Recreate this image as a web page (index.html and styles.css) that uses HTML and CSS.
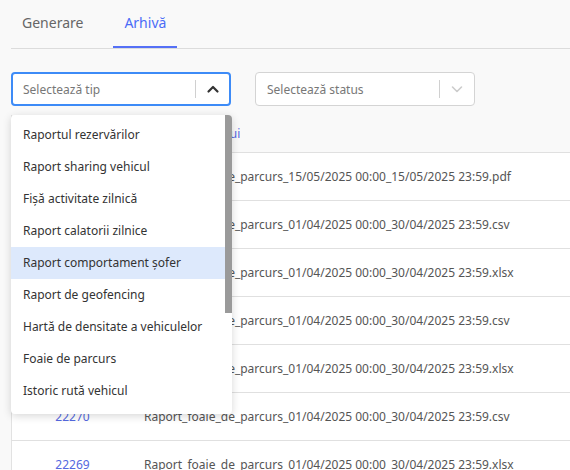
FILE: index.html
```html
<!DOCTYPE html>
<html lang="ro">

<head>
  <meta charset="UTF-8">
  <meta name="viewport" content="width=device-width, initial-scale=1.0">
  <title>Rapoarte - Arhivă</title>
  <link rel="stylesheet" href="styles.css">
</head>

<body>
  <!-- Tabs -->
  <div class="tabs">
    <div class="tab">Generare</div>
    <div class="tab active">Arhivă</div>
  </div>

  <!-- Filtre -->
  <div class="filters">
    <div class="select open">
      <span class="placeholder">Selectează tip</span>
      <span class="sep"></span>
      <svg class="chevron" width="14" height="14" viewBox="0 0 14 14">
        <path d="M2.5 9.5 L7 5 L11.5 9.5" fill="none" stroke="#333" stroke-width="2.2" stroke-linecap="round" stroke-linejoin="round"/>
      </svg>

      <!-- Lista tipuri raport -->
      <div class="dropdown">
        <ul>
          <li>Raportul rezervărilor</li>
          <li>Raport sharing vehicul</li>
          <li>Fişă activitate zilnică</li>
          <li>Raport calatorii zilnice</li>
          <li class="focused">Raport comportament şofer</li>
          <li>Raport de geofencing</li>
          <li>Hartă de densitate a vehiculelor</li>
          <li>Foaie de parcurs</li>
          <li>Istoric rută vehicul</li>
          <li>Raport alimentări</li>
          <li>Raport kilometraj</li>
          <li>Raport opriri</li>
          <li>Raport viteză</li>
          <li>Raport utilizare vehicul</li>
        </ul>
        <span class="scroll-thumb"></span>
      </div>
    </div>

    <div class="select">
      <span class="placeholder">Selectează status</span>
      <span class="sep"></span>
      <svg class="chevron" width="14" height="14" viewBox="0 0 14 14">
        <path d="M2.5 5 L7 9.5 L11.5 5" fill="none" stroke="#ccc" stroke-width="1.6" stroke-linecap="round" stroke-linejoin="round"/>
      </svg>
    </div>
  </div>

  <!-- Tabel arhivă -->
  <table class="archive">
    <thead>
      <tr>
        <th class="col-id">ID</th>
        <th class="col-name">Numele fișierului</th>
      </tr>
    </thead>
    <tbody>
      <tr>
        <td class="col-id"><a href="#">22275</a></td>
        <td>Raport_foaie_de_parcurs_15/05/2025 00:00_15/05/2025 23:59.pdf</td>
      </tr>
      <tr>
        <td class="col-id"><a href="#">22274</a></td>
        <td>Raport_foaie_de_parcurs_01/04/2025 00:00_30/04/2025 23:59.csv</td>
      </tr>
      <tr>
        <td class="col-id"><a href="#">22273</a></td>
        <td>Raport_foaie_de_parcurs_01/04/2025 00:00_30/04/2025 23:59.xlsx</td>
      </tr>
      <tr>
        <td class="col-id"><a href="#">22272</a></td>
        <td>Raport_foaie_de_parcurs_01/04/2025 00:00_30/04/2025 23:59.csv</td>
      </tr>
      <tr>
        <td class="col-id"><a href="#">22271</a></td>
        <td>Raport_foaie_de_parcurs_01/04/2025 00:00_30/04/2025 23:59.xlsx</td>
      </tr>
      <tr>
        <td class="col-id"><a href="#">22270</a></td>
        <td>Raport_foaie_de_parcurs_01/04/2025 00:00_30/04/2025 23:59.csv</td>
      </tr>
      <tr>
        <td class="col-id"><a href="#">22269</a></td>
        <td>Raport_foaie_de_parcurs_01/04/2025 00:00_30/04/2025 23:59.xlsx</td>
      </tr>
    </tbody>
  </table>
</body>

</html>
```

FILE: styles.css
```css
body {
  font-family: "Noto Sans", "Open Sans", sans-serif;
  margin: 0;
  padding: 0 0 0 11px;
  background-color: #f9f9f9;
  color: #333;
  overflow: hidden;
}

/* Tabs */
.tabs {
  display: flex;
  gap: 19px;
  border-bottom: 1px solid #dcdcdc;
}

.tab {
  padding: 0 11px;
  height: 46px;
  line-height: 46px;
  font-size: 14px;
  color: #666;
  border-bottom: 2px solid transparent;
}

.tab.active {
  color: #4a6cf7;
  border-bottom-color: #5570f6;
}

/* Filters */
.filters {
  display: flex;
  gap: 24px;
  padding-top: 23px;
}

.select {
  position: relative;
  display: flex;
  align-items: center;
  box-sizing: border-box;
  width: 220px;
  height: 34px;
  padding: 0 10px 0 11px;
  background-color: #fff;
  border: 1px solid #d4d4d4;
  border-radius: 4px;
}

.select.open {
  border: 2px solid #3d8bf7;
  padding: 0 9px 0 10px;
}

.placeholder {
  flex: 1;
  font-size: 12px;
  color: #777;
}

.sep {
  width: 1px;
  height: 18px;
  background-color: #d0d0d0;
  margin-right: 10px;
}

.chevron {
  display: block;
}

/* Dropdown */
.dropdown {
  position: absolute;
  top: 41px;
  left: -2px;
  width: 221px;
  height: 299px;
  overflow: hidden;
  background-color: #fff;
  border-radius: 4px;
  box-shadow: 0 2px 8px rgba(0, 0, 0, 0.16);
  z-index: 10;
}

.dropdown ul {
  margin: 0;
  padding: 4px 7px 0 0;
  list-style: none;
}

.dropdown li {
  height: 32px;
  line-height: 32px;
  padding-left: 12px;
  font-size: 12px;
  color: #333;
  white-space: nowrap;
}

.dropdown li.focused {
  background-color: #dde9fc;
}

.scroll-thumb {
  position: absolute;
  top: 0;
  right: 0;
  width: 7px;
  height: 198px;
  background-color: #9a9a9a;
}

/* Table */
.archive {
  width: 620px;
  margin-top: 9px;
  border-collapse: collapse;
  font-size: 12px;
  border-left: 1px solid #e2e2e2;
}

.archive th {
  height: 37px;
  padding: 0 11px;
  text-align: left;
  font-weight: normal;
  color: #5468e0;
  border-bottom: 1px solid #e0e0e0;
}

.archive td {
  height: 47px;
  padding: 0 11px;
  background-color: #fff;
  color: #555;
  white-space: nowrap;
  border-bottom: 1px solid #e0e0e0;
}

.archive .col-id {
  width: 99px;
  text-align: center;
}

.archive a {
  color: #5468e0;
  text-decoration: none;
}
```
